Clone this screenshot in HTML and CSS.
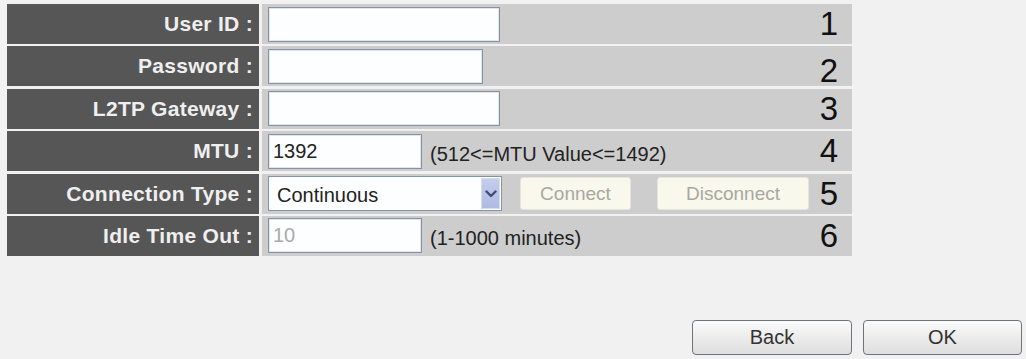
FILE: index.html
```html
<!DOCTYPE html>
<html lang="en">
<head>
  <meta charset="UTF-8" />
  <title>L2TP Settings</title>
  <link rel="stylesheet" href="styles.css">
</head>
<body>
  <div class="page">
    <div class="settings">
      <div class="label">User ID :</div>
      <div class="value">
        <input type="text" class="field wide" />
        <span class="num">1</span>
      </div>

      <div class="label">Password :</div>
      <div class="value">
        <input type="password" class="field medium" />
        <span class="num low">2</span>
      </div>

      <div class="label">L2TP Gateway :</div>
      <div class="value">
        <input type="text" class="field wide" />
        <span class="num">3</span>
      </div>

      <div class="label">MTU :</div>
      <div class="value">
        <input type="text" class="field short" value="1392" />
        <span class="hint">(512&lt;=MTU Value&lt;=1492)</span>
        <span class="num">4</span>
      </div>

      <div class="label">Connection Type :</div>
      <div class="value">
        <div class="select-wrap">
          <select class="select">
            <option>Continuous</option>
            <option>Connect on Demand</option>
            <option>Manual</option>
          </select>
          <span class="select-arrow">
            <svg width="12" height="8" viewBox="0 0 12 8"><path d="M1.5 1.5 L6 6 L10.5 1.5" fill="none" stroke="#3d4c7c" stroke-width="2.4" stroke-linecap="round" stroke-linejoin="round"/></svg>
          </span>
        </div>
        <button class="soft-btn connect" disabled>Connect</button>
        <button class="soft-btn disconnect" disabled>Disconnect</button>
        <span class="num">5</span>
      </div>

      <div class="label">Idle Time Out :</div>
      <div class="value">
        <input type="text" class="field short" value="10" disabled />
        <span class="hint">(1-1000 minutes)</span>
        <span class="num">6</span>
      </div>
    </div>

    <div class="actions">
      <button class="btn back">Back</button>
      <button class="btn ok">OK</button>
    </div>
  </div>
</body>
</html>
```

FILE: styles.css
```css
body {
  margin: 0;
  background-color: #f1f1f1;
  font-family: 'Liberation Sans', Arial, sans-serif;
  color: #222;
}
.page {
  padding: 4px 4px 0 7px;
}
.settings {
  display: grid;
  grid-template-columns: 252px 590px;
  grid-auto-rows: 40px;
  column-gap: 3px;
  row-gap: 2.4px;
}
.label {
  background-color: #565656;
  color: #efefef;
  font-weight: bold;
  font-size: 21px;
  letter-spacing: 0.3px;
  display: flex;
  align-items: center;
  justify-content: flex-end;
  padding-right: 6px;
}
.value {
  background-color: #cdcdcd;
  display: flex;
  align-items: center;
  padding-left: 6px;
  padding-right: 14px;
}
.field {
  box-sizing: border-box;
  height: 35px;
  border: 1px solid #8492a3;
  box-shadow: inset 0 0 0 1px #e2e6ea;
  background-color: #fdfeff;
  font-family: 'Liberation Sans', Arial, sans-serif;
  font-size: 20px;
  color: #222;
  padding: 0 4px;
  margin: 0;
}
.field:disabled {
  color: #aaa;
  background-color: #fdfeff;
}
.wide { width: 232px; }
.medium { width: 215px; }
.short { width: 154px; }
.hint {
  font-size: 20px;
  color: #222;
  margin-left: 8px;
  padding-top: 6px;
}
.num {
  margin-left: auto;
  font-size: 33px;
  color: #111;
}
.num.low {
  padding-top: 10px;
}
.select-wrap {
  position: relative;
  width: 234px;
  height: 35px;
}
.select {
  box-sizing: border-box;
  width: 100%;
  height: 100%;
  appearance: none;
  -webkit-appearance: none;
  border: 1px solid #8492a3;
  background-color: #fdfeff;
  font-family: 'Liberation Sans', Arial, sans-serif;
  font-size: 20px;
  color: #222;
  padding: 2px 0 0 8px;
  margin: 0;
  border-radius: 0;
}
.select-arrow {
  position: absolute;
  top: 2px;
  right: 2px;
  bottom: 2px;
  width: 19px;
  background: linear-gradient(#c4cdea, #aebbe2);
  border: 1px solid #d6dcf0;
  box-sizing: border-box;
  display: flex;
  align-items: center;
  justify-content: center;
}
.soft-btn {
  height: 33px;
  background-color: #f8f8ec;
  border: 1px solid #e4e4d8;
  border-radius: 3px;
  color: #a8a8a0;
  font-family: 'Liberation Sans', Arial, sans-serif;
  font-size: 19px;
  padding: 0;
}
.connect {
  width: 111px;
  margin-left: 18px;
}
.disconnect {
  width: 152px;
  margin-left: 26px;
}
.actions {
  display: flex;
  justify-content: flex-end;
  gap: 11px;
  margin-top: 64px;
}
.btn {
  width: 160px;
  height: 35px;
  background: linear-gradient(#fbfbfb, #ececec 50%, #dedede);
  border: 1px solid #6f747a;
  border-radius: 4px;
  font-family: 'Liberation Sans', Arial, sans-serif;
  font-size: 20px;
  color: #333;
  padding: 0;
}
.btn.ok {
  width: 159px;
}
```
